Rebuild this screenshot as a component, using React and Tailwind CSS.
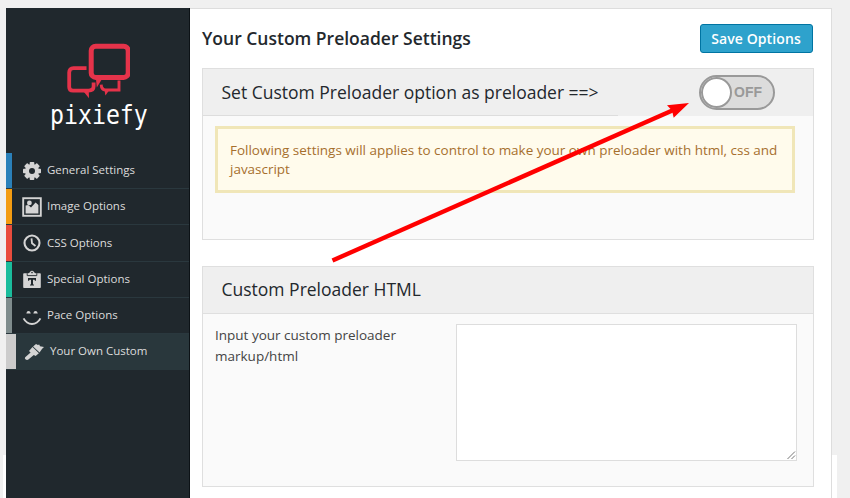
import React from "react";

const light = "#d4d4d4";

function GearIcon() {
  return (
    <svg width="20" height="20" viewBox="0 0 20 20" className="block">
      <g fill={light}>
        {[0, 45, 90, 135].map((a) => (
          <rect key={a} x="7.7" y="1" width="4.6" height="18" rx="0.8" transform={`rotate(${a} 10 10)`} />
        ))}
        <circle cx="10" cy="10" r="7" />
      </g>
      <circle cx="10" cy="10" r="3" fill="#20282d" />
    </svg>
  );
}

function ImageIcon() {
  return (
    <svg width="20" height="20" viewBox="0 0 20 20" className="block">
      <rect x="1.2" y="1.2" width="17.6" height="17.6" fill="none" stroke={light} strokeWidth="1.9" />
      <path d="M3.6 8.6L6.2 8L9 10.4L13.6 5.6L16.4 8V16.4H3.6Z" fill={light} />
      <circle cx="7.4" cy="5.9" r="2.4" fill={light} />
    </svg>
  );
}

function ClockIcon() {
  return (
    <svg width="20" height="20" viewBox="0 0 20 20" className="block" fill="none" stroke={light}>
      <circle cx="10" cy="10" r="7.5" strokeWidth="2.1" />
      <path d="M9.5 5.3L10 10.2L13.5 13" strokeWidth="1.8" />
    </svg>
  );
}

function ClipboardIcon() {
  return (
    <svg width="20" height="20" viewBox="0 0 20 20" className="block">
      <path d="M2 3.2H6.5L8 2.2A2.1 2.1 0 0 1 12 2.2L13.5 3.2H18Q18.8 3.2 18.8 4V17.2Q18.8 18 18 18H2Q1.2 18 1.2 17.2V4Q1.2 3.2 2 3.2Z" fill={light} />
      <path d="M5.2 3.2V5.6H14.8V3.2" fill="none" stroke="#20282d" strokeWidth="0.9" />
      <circle cx="10" cy="2.6" r="0.8" fill="#20282d" />
      <path d="M6 8H14V10.8H13L12.5 9.7H11V14.5H12V15.6H8V14.5H9V9.7H7.5L7 10.8H6Z" fill="#20282d" />
    </svg>
  );
}

function SmileIcon() {
  return (
    <svg width="20" height="20" viewBox="0 0 20 20" className="block">
      <path d="M1.6 12.4Q4.5 18 10 18T18.4 12.4" fill="none" stroke={light} strokeWidth="1.9" />
      <path d="M4.3 7.4Q4.8 5 6.5 5T8.8 7.4ZM11.3 7.4Q11.8 5 13.5 5T15.8 7.4Z" fill={light} />
    </svg>
  );
}

function BrushIcon() {
  return (
    <svg width="20" height="20" viewBox="0 0 20 20" className="block">
      <path d="M1.2 15.2L6.6 10.4L5 9L8.5 5L14.9 11.2L11.6 14L9.8 12.9L4.4 17.6Q2.8 18.5 1.4 17.2Q.4 16.2 1.2 15.2Z" fill={light} />
      <path d="M9.1 4.4L12 2L13.9 3L15.2 2.4L16 4.2L20 5Q17.8 6.6 15.6 10.6Z" fill={light} />
    </svg>
  );
}

function Logo() {
  return (
    <svg width="64" height="58" viewBox="0 0 64 58" className="block" fill="none" stroke="#e5334a">
      <rect x="25.2" y="4.2" width="37" height="31.2" rx="4.5" strokeWidth="5" />
      <path d="M30 37H36L30.8 45.5Z" fill="#e5334a" stroke="none" />
      <path d="M20.5 26.2H7.5Q3.2 26.2 3.2 30.5V45Q3.2 48.6 7 48.6H22.5Q27.6 48.6 27.6 44.6V40.6" strokeWidth="3.8" />
      <path d="M17.5 49.5H22.8L23 56.2Z" fill="#e5334a" stroke="none" />
      <path d="M53 38.5V48H39.5Q35.4 47.6 35.2 42.6" strokeWidth="2.9" />
      <path d="M38.6 48.5H43L39.4 53.4Z" fill="#e5334a" stroke="none" />
    </svg>
  );
}

const items = [
  { label: "General Settings", Icon: GearIcon, bar: "bg-[#2a80b9]" },
  { label: "Image Options", Icon: ImageIcon, bar: "bg-[#f39c12]" },
  { label: "CSS Options", Icon: ClockIcon, bar: "bg-[#e94c3d]" },
  { label: "Special Options", Icon: ClipboardIcon, bar: "bg-[#1abc9c]" },
  { label: "Pace Options", Icon: SmileIcon, bar: "bg-[#7f8c8d]" },
  { label: "Your Own Custom", Icon: BrushIcon, bar: "bg-[#cccccc]", active: true },
];

function Sidebar() {
  return (
    <aside className="w-[183.5px] shrink-0 bg-[#20282d] border-r border-[#0c1216]">
      <div className="h-[145px] flex flex-col items-center pt-[34px]">
        <div className="ml-[2px]"><Logo /></div>
        <div className="mt-[-2px] ml-[3px] h-[34px] flex justify-center">
          <span className="inline-block font-['DejaVu_Sans_Mono',monospace] text-white text-[27px] leading-[34px] scale-x-[0.86] whitespace-nowrap">
            pixiefy
          </span>
        </div>
      </div>
      <nav>
        {items.map(({ label, Icon, bar, active }) => (
          <div
            key={label}
            className={`h-[36.2px] flex items-center border-b ${active ? "bg-[#29373c] border-[#29373c]" : "border-[#2a383e]"}`}
          >
            <span className={`self-stretch ${active ? "w-[10px]" : "w-[6px]"} ${bar}`} />
            <span className={`${active ? "ml-[8px] mr-[1px]" : "ml-[9.5px] mr-[0.5px]"} mt-[1px]`}><Icon /></span>
            <span className="ml-[5px] mt-[-1.6px] text-[11.5px] text-[#dcdcdc] whitespace-nowrap">{label}</span>
          </div>
        ))}
      </nav>
    </aside>
  );
}

function Toggle() {
  return (
    <div className="mt-[6px] w-[76px] h-[35px] rounded-full border-2 border-[#999] bg-[#dcdcdc] flex items-center overflow-hidden shrink-0">
      <span className="w-[31px] h-[31px] rounded-full border-2 border-[#999] bg-white shrink-0" />
      <span className="ml-[2px] font-['Liberation_Sans'] font-bold text-[14px] text-[#999]">OFF</span>
    </div>
  );
}

function Arrow() {
  return (
    <svg width="850" height="498" viewBox="0 0 850 498" className="absolute left-0 top-0 pointer-events-none">
      <path d="M332.5 260.5L674 109.7" stroke="#ff0000" strokeWidth="4.4" />
      <path d="M689 103L667 105.3L672 110.5L673.7 117.8Z" fill="#ff0000" />
    </svg>
  );
}

export default function App() {
  return (
    <div className="relative w-[850px] h-[498px] overflow-hidden bg-[#f0f0f0] pt-[8px] flex font-['Open_Sans',sans-serif]">
      <div className="w-[6px] flex flex-col items-end justify-end">
        <div className="w-[3px] h-[43px] bg-white" />
      </div>
      <Sidebar />
      <main className="w-[642px] bg-white border-t border-r border-[#dddddd] pl-[12.5px] pr-[17px]">
        <div className="h-[59px] flex items-center justify-between">
          <h1 className="mt-[-1px] font-semibold text-[17.5px] text-[#23282d] whitespace-nowrap">Your Custom Preloader Settings</h1>
          <button className="mr-[1px] w-[113px] h-[29px] rounded-[3px] border border-[#0074a2] bg-[#2ea2cc] text-white font-semibold text-[14px] tracking-[0.1px] whitespace-nowrap">
            Save Options
          </button>
        </div>
        <section className="h-[172px] border border-[#dfdfdf] bg-[#fafafa]">
          <div className="h-[47px] bg-[#efefef] flex items-start pl-[18.5px] pr-[37.5px] justify-between">
            <h2 className="text-[17.5px] leading-[46px] text-[#23282d] whitespace-nowrap">Set Custom Preloader option as preloader ==&gt;</h2>
            <Toggle />
          </div>
          <div className="mt-[-1px] w-[415px] border-t border-[#dddddd]" />
          <div className="mt-[10px] ml-[12px] w-[580px] h-[67px] border-[3px] border-[#f0e6b8] bg-[#fffbec] pl-[12px] pt-[12px] text-[13.48px] leading-[19px] text-[#a66f2c]">
            <p className="whitespace-nowrap">Following settings will applies to control to make your own preloader with html, css and</p>
            <p>javascript</p>
          </div>
        </section>
        <section className="mt-[26px] h-[221px] border border-[#dfdfdf] bg-[#fafafa]">
          <div className="h-[47px] border-b border-[#dfdfdf] bg-[#efefef] pl-[18.5px]">
            <h2 className="text-[17.5px] leading-[45px] text-[#23282d]">Custom Preloader HTML</h2>
          </div>
          <div className="flex pl-[12px] pt-[10px]">
            <p className="w-[240.5px] pt-[1px] text-[13.5px] leading-[20.5px] text-[#444]">
              Input your custom preloader
              <br />
              markup/html
            </p>
            <div className="w-[341px] h-[137px] border border-[#dddddd] bg-white flex items-end justify-end">
              <svg width="10" height="10" viewBox="0 0 10 10" stroke="#777" strokeWidth="1">
                <path d="M1.5 9L9 1.5M5.5 9L9 5.5" />
              </svg>
            </div>
          </div>
        </section>
      </main>
      <div className="w-[5px] flex flex-col justify-end">
        <div className="h-[43px] bg-white" />
      </div>
      <Arrow />
    </div>
  );
}
